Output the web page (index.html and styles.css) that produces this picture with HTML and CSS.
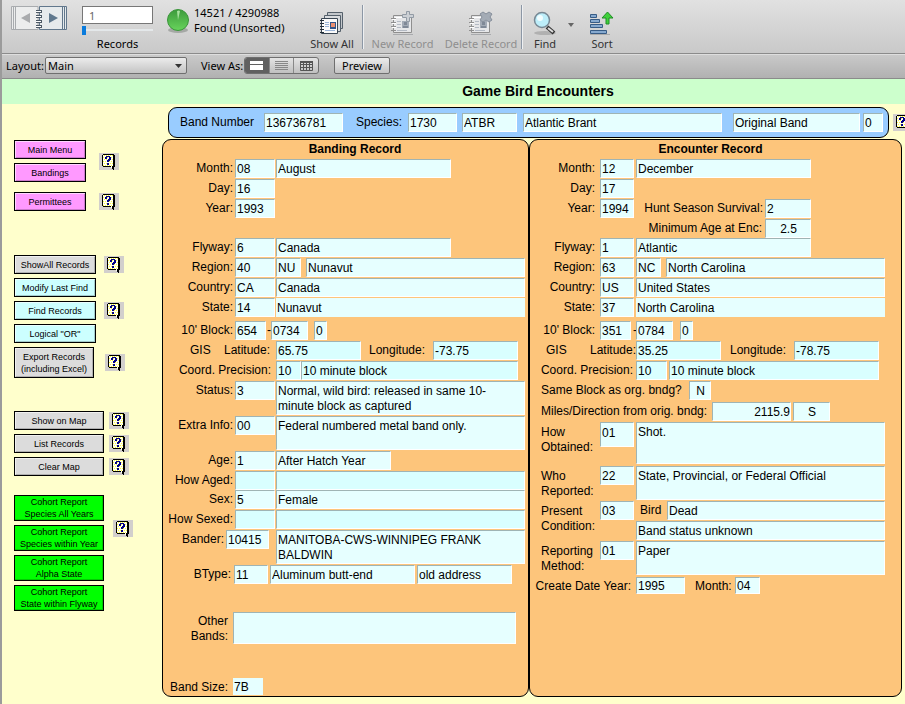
FILE: index.html
```html
<!DOCTYPE html>
<html lang="en">
<head>
<meta charset="utf-8">
<title>Game Bird Encounters</title>
<link rel="stylesheet" href="styles.css">
</head>
<body>
<svg class="defs" aria-hidden="true">
  <symbol id="help" viewBox="0 0 20 17">
    <path d="M4 1h11v1h1v12h-1v3h-1v-1h-1v-1h-1v-1H4v-1H3V2h1z" fill="#000"/>
    <path d="M4 2h10v11h-1v2h-1v-2H4z" fill="#fffff4"/>
    <path d="M5 2.500h9M4 4.500h10M5 6.500h9M4 8.500h10M5 10.500h9M4 12.500h9" stroke="#ffff3c" stroke-dasharray="1 1"/>
    <path d="M7 3h4v1h1v3h-1v1h-1v1H8V7h1V6h1V4H8v2H6V4h1zM8 10h2v2H8z" fill="#000084"/>
  </symbol>
  <symbol id="card" viewBox="0 0 24 24">
    <path d="M3 23.500h20" stroke="#a9abae"/>
    <path d="M3.500 4.500h18v17h-18z" fill="#e6e7e9" stroke="currentColor"/>
    <path d="M4.500 6.500h16" stroke="#fff"/>
    <path d="M1 7.500h5M1 11.500h5M1 15.500h5M1 19.500h5" stroke="currentColor"/>
    <path d="M2 8.500h4M2 12.500h4M2 16.500h4" stroke="#fff"/>
    <path d="M7 10.500h4M7 13.500h4M7 16.500h4M7 19.500h10" stroke="#b4bac4"/>
    <path d="M12 10h7v7h-7z" fill="#a3abb6"/>
    <path d="M14 11h3v3h-3zM13 15h5v2h-5z" fill="#7f8997"/>
  </symbol>
</svg>
<div class="app">
  <header class="toolbar">
    <div class="book">
      <button aria-label="Previous record"><svg width="28" height="27" viewBox="0 0 28 27"><path d="M.500 1.500H27v23H.500zM2.500 1.500v23M4.500 1.500v23" fill="#eceded" stroke="#a8abae"/><path d="M10 13l9-5v10z" fill="#a9abad"/></svg></button>
      <button aria-label="Next record"><svg width="29" height="27" viewBox="0 0 29 27"><path d="M.500 1.500h27v23H.500z" fill="#e6eaec" stroke="#61778c"/><path d="M23.500 2v22M25.500 2v22" stroke="#61778c"/><path d="M19 13l-9-5v10z" fill="#5f788e"/></svg></button>
      <svg class="rings" width="8" height="27" viewBox="0 0 8 27"><path d="M1 6.500h6M1 11.500h6M1 16.500h6M1 21.500h6" stroke="#4d5a66" stroke-width="3"/><path d="M1 6.500h5M1 11.500h5M1 16.500h5M1 21.500h5" stroke="#fff"/></svg>
    </div>
    <div class="records">
      <input id="rec" value="1" aria-label="Record number">
      <input id="slide" type="range" min="1" max="14521" value="1" aria-label="Record slider">
      <label for="rec">Records</label>
    </div>
    <svg class="pie" width="24" height="28" viewBox="0 0 24 28"><defs><linearGradient id="g" x2="0" y2="1"><stop stop-color="#3c9a3c"/><stop offset="1" stop-color="#68d45c"/></linearGradient></defs><ellipse cx="12" cy="23" rx="10" ry="3" fill="#a5a8a5"/><circle cx="12" cy="13" r="10.500" fill="url(#g)" stroke="#3b963b"/><path d="M12 13L11 4q2-1 3 0z" fill="#a6e29e"/></svg>
    <div class="found"><div>14521 / 4290988</div><div>Found (Unsorted)</div></div>
    <button class="tool show"><svg width="26" height="26" viewBox="0 0 26 26"><path d="M8.500 2.500h15v16h-15z" fill="#c3c7cb" stroke="#55606b"/><path d="M5.500 5.500h16v16h-16z" fill="#d9dcdf" stroke="#55606b"/><path d="M2.500 8.500h16v15h-16z" fill="#fafafa" stroke="#394653"/><path d="M1 10.500h4M1 13.500h4M1 16.500h4M1 19.500h4M1 22.500h4" stroke="#222d38"/><path d="M6 12.500h4M6 14.500h4M6 16.500h4M6 20.500h10" stroke="#9bb4d8"/><path d="M11 12h6v7h-6z" fill="#31548a"/><path d="M12 13h4v4h-4z" fill="#e88e70"/></svg><span>Show All</span></button>
    <i class="rule"></i>
    <button class="tool off new"><svg width="26" height="26" viewBox="0 0 26 26"><use href="#card" width="24" height="24" y="1"/><path d="M16.500 1.500h3v3h4v3h-4v4h-3v-4h-4v-3h4z" fill="#ccd0d5" stroke="#929ba5"/></svg><span>New Record</span></button>
    <button class="tool off del"><svg width="26" height="26" viewBox="0 0 26 26"><use href="#card" width="24" height="24" y="1"/><path d="M15 2l3 2 3-2 3 2-2 3 2 3-3 2-3-2-3 2-3-2 2-3-2-3z" fill="#a3abb5" stroke="#868f9b"/></svg><span>Delete Record</span></button>
    <i class="rule"></i>
    <button class="tool find"><svg width="24" height="26" viewBox="0 0 24 26"><ellipse cx="12" cy="23" rx="11" ry="2" fill="#b0b0b0"/><path d="M14 17l7 6" stroke="#333" stroke-width="4"/><path d="M15 18l5 4" stroke="#ddd" stroke-width="2"/><circle cx="9" cy="10" r="7.500" fill="#bdeefa" stroke="#788995" stroke-width="1.500"/><circle cx="7" cy="8" r="3" fill="#f2fdff"/></svg><span>Find</span></button>
    <button class="more" aria-label="Find options"></button>
    <button class="tool sort"><svg width="26" height="26" viewBox="0 0 26 26"><path d="M1 24.500h20" stroke="#aaa"/><path d="M1.500 4.500h6v3h-6zM1.500 9.500h9v3h-9zM1.500 14.500h12v3h-12zM1.500 20.500h16v3h-16z" fill="#86a9cf" stroke="#375c86"/><path d="M18.500 2l5.500 6h-4v6h-3V8h-4z" fill="#3fd13a" stroke="#218c26"/></svg><span>Sort</span></button>
  </header>
  <div class="layoutbar">
    <label for="lay">Layout:</label>
    <span class="pick"><select id="lay"><option>Main</option></select></span>
    <span class="viewas">View As:</span>
    <span class="seg">
      <button class="on" aria-label="Form view"><svg width="15" height="11"><path d="M1 1h13v3H1zM1 5h13v5H1z" fill="#fff"/></svg></button>
      <button aria-label="List view"><svg width="15" height="11"><path d="M1 1.500h13M1 3.500h13M1 5.500h13M1 7.500h13M1 9.500h13" stroke="#888"/></svg></button>
      <button aria-label="Table view"><svg width="15" height="11"><path d="M1 1h13v2H1z" fill="#555"/><path d="M1.500 1v9.500h12V1M1 4.500h13M1 7.500h13M4.500 1v9M7.500 1v9M10.500 1v9" fill="none" stroke="#555"/></svg></button>
    </span>
    <button class="preview">Preview</button>
  </div>
  <h1>Game Bird Encounters</h1>
  <div class="body">
    <nav class="side">
      <div class="set pink">
        <div class="stack"><button class="b">Main Menu</button><button class="b">Bandings</button></div>
        <button class="help" aria-label="Help"><svg><use href="#help"/></svg></button>
      </div>
      <div class="set pink second"><button class="b">Permittees</button><button class="help" aria-label="Help"><svg><use href="#help"/></svg></button></div>
      <div class="group rec">
        <div class="set"><button class="b gray">ShowAll Records</button><button class="help" aria-label="Help"><svg><use href="#help"/></svg></button></div>
        <div class="set"><button class="b">Modify Last Find</button></div>
        <div class="set"><button class="b">Find Records</button><button class="help" aria-label="Help"><svg><use href="#help"/></svg></button></div>
        <div class="set"><button class="b">Logical "OR"</button></div>
        <div class="set export"><button class="b gray">Export Records<br>(including Excel)</button><button class="help" aria-label="Help"><svg><use href="#help"/></svg></button></div>
      </div>
      <div class="group map">
        <div class="set"><button class="b gray">Show on Map</button><button class="help" aria-label="Help"><svg><use href="#help"/></svg></button></div>
        <div class="set"><button class="b gray">List Records</button><button class="help" aria-label="Help"><svg><use href="#help"/></svg></button></div>
        <div class="set"><button class="b gray">Clear Map</button><button class="help" aria-label="Help"><svg><use href="#help"/></svg></button></div>
      </div>
      <div class="group cohort">
        <div class="set">
          <div class="stack"><button class="b">Cohort Report<br>Species All Years</button><button class="b">Cohort Report<br>Species within Year</button></div>
          <button class="help" aria-label="Help"><svg><use href="#help"/></svg></button>
        </div>
        <button class="b">Cohort Report<br>Alpha State</button>
        <button class="b">Cohort Report<br>State within Flyway</button>
      </div>
    </nav>
    <main>
      <div class="top">
        <div class="band">
          <label for="bn">Band Number</label><input id="bn" class="w79" value="136736781">
          <label for="sp" class="sp">Species:</label><input id="sp" class="w49" value="1730">
          <input class="w55 alpha" aria-label="Species code" value="ATBR">
          <input class="grow name" aria-label="Species name" value="Atlantic Brant">
          <input class="w127 orig" aria-label="Band type" value="Original Band">
          <input class="w20 zero" aria-label="Band flag" value="0">
        </div>
        <button class="help" aria-label="Help"><svg><use href="#help"/></svg></button>
      </div>
      <div class="panels">
        <section class="panel banding">
          <h2>Banding Record</h2>
          <div class="row"><label for="a1">Month:</label><input id="a1" class="code" value="08"><input class="w175" aria-label="Month name" value="August"></div>
          <div class="row"><label for="a2">Day:</label><input id="a2" class="code" value="16"></div>
          <div class="row"><label for="a3">Year:</label><input id="a3" class="code" value="1993"></div>
          <div class="row skip"><label for="a4">Flyway:</label><input id="a4" class="code" value="6"><input class="w175" aria-label="Flyway name" value="Canada"></div>
          <div class="row"><label for="a5">Region:</label><input id="a5" class="code" value="40"><input class="w25" aria-label="Region code" value="NU"><input class="grow g4" aria-label="Region name" value="Nunavut"></div>
          <div class="row"><label for="a6">Country:</label><input id="a6" class="code" value="CA"><input class="grow" aria-label="Country name" value="Canada"></div>
          <div class="row"><label for="a7">State:</label><input id="a7" class="code" value="14"><input class="grow flat" aria-label="State name" value="Nunavut"></div>
          <div class="row block"><label for="a8">10' Block:</label><input id="a8" class="w31" value="654"><span class="dash">-</span><input class="w37" aria-label="Block longitude" value="0734"><input class="w13" aria-label="Block part" value="0"></div>
          <div class="row gis"><span class="gl">GIS</span><label for="a9" class="lat">Latitude:</label><input id="a9" class="w85 deep" value="65.75"><label for="a10" class="lon">Longitude:</label><input id="a10" class="w85 deep" value="-73.75"></div>
          <div class="row prec"><label for="a11">Coord. Precision:</label><input id="a11" class="w25 deep" value="10"><input class="grow deep" aria-label="Precision" value="10 minute block"></div>
          <div class="row"><label for="a12">Status:</label><input id="a12" class="code" value="3"><textarea class="grow h34" aria-label="Status text">Normal, wild bird: released in same 10-minute block as captured</textarea></div>
          <div class="row"><label for="a13">Extra Info:</label><input id="a13" class="code" value="00"><textarea class="grow h34" aria-label="Extra info text">Federal numbered metal band only.</textarea></div>
          <div class="row"><label for="a14">Age:</label><input id="a14" class="code" value="1"><input class="w115" aria-label="Age text" value="After Hatch Year"></div>
          <div class="row"><label for="a15">How Aged:</label><input id="a15" class="code deep"><input class="grow deep" aria-label="How aged text"></div>
          <div class="row tight"><label for="a16">Sex:</label><input id="a16" class="code" value="5"><input class="grow" aria-label="Sex text" value="Female"></div>
          <div class="row"><label for="a17">How Sexed:</label><input id="a17" class="code deep"><input class="grow deep" aria-label="How sexed text"></div>
          <div class="row bander"><label for="a18">Bander:</label><input id="a18" class="w43" value="10415"><textarea class="grow h34" aria-label="Bander name">MANITOBA-CWS-WINNIPEG FRANK BALDWIN</textarea></div>
          <div class="row btype"><label for="a19">BType:</label><input id="a19" class="w34" value="11"><input class="w145" aria-label="Band type text" value="Aluminum butt-end"><input class="w95" aria-label="Address type" value="old address"></div>
          <div class="row other"><label for="a20">Other<br>Bands:</label><textarea id="a20" class="grow h32"></textarea></div>
          <div class="row size"><label for="a21">Band Size:</label><input id="a21" class="w30 flat h17" value="7B"></div>
        </section>
        <section class="panel enc">
          <h2>Encounter Record</h2>
          <div class="row"><label for="b1">Month:</label><input id="b1" class="code" value="12"><input class="w175" aria-label="Month name" value="December"></div>
          <div class="row"><label for="b2">Day:</label><input id="b2" class="code" value="17"></div>
          <div class="row"><label for="b3">Year:</label><input id="b3" class="code" value="1994"><label class="side-label" for="b4">Hunt Season Survival:</label><input id="b4" class="w46" value="2"></div>
          <div class="row age"><label for="b5">Minimum Age at Enc:</label><input id="b5" class="w46 mid" value="2.5"></div>
          <div class="row tight"><label for="b6">Flyway:</label><input id="b6" class="code" value="1"><input class="w175" aria-label="Flyway name" value="Atlantic"></div>
          <div class="row"><label for="b7">Region:</label><input id="b7" class="code" value="63"><input class="w25" aria-label="Region code" value="NC"><input class="grow g4" aria-label="Region name" value="North Carolina"></div>
          <div class="row"><label for="b8">Country:</label><input id="b8" class="code" value="US"><input class="grow" aria-label="Country name" value="United States"></div>
          <div class="row"><label for="b9">State:</label><input id="b9" class="code" value="37"><input class="grow flat" aria-label="State name" value="North Carolina"></div>
          <div class="row block"><label for="b10">10' Block:</label><input id="b10" class="w31" value="351"><span class="dash">-</span><input class="w37" aria-label="Block longitude" value="0784"><input class="w13" aria-label="Block part" value="0"></div>
          <div class="row gis"><span class="gl">GIS</span><label for="b11" class="lat">Latitude:</label><input id="b11" class="w85 deep" value="35.25"><label for="b12" class="lon">Longitude:</label><input id="b12" class="w85 deep" value="-78.75"></div>
          <div class="row prec"><label for="b13">Coord. Precision:</label><input id="b13" class="w31 deep" value="10"><input class="grow deep" aria-label="Precision" value="10 minute block"></div>
          <div class="row same"><label for="b14">Same Block as org. bndg?</label><input id="b14" class="w22 mid" value="N"></div>
          <div class="row miles"><label for="b15">Miles/Direction from orig. bndg:</label><input id="b15" class="w79 end" value="2115.9"><input class="w37 mid" aria-label="Direction" value="S"></div>
          <div class="row two"><label for="b16">How<br>Obtained:</label><input id="b16" class="code h25" value="01"><textarea class="grow h42" aria-label="How obtained text">Shot.</textarea></div>
          <div class="row two who"><label for="b17">Who<br>Reported:</label><input id="b17" class="code" value="22"><textarea class="grow h34" aria-label="Who reported text">State, Provincial, or Federal Official</textarea></div>
          <div class="row two"><label for="b18">Present<br>Condition:</label><input id="b18" class="code" value="03">
            <div class="cond"><div class="bird"><label for="b19">Bird</label><input id="b19" class="grow" value="Dead"></div><input aria-label="Band status" value="Band status unknown"></div></div>
          <div class="row two"><label for="b20">Reporting<br>Method:</label><input id="b20" class="code" value="01"><textarea class="grow h34" aria-label="Reporting method text">Paper</textarea></div>
          <div class="row create"><label for="b21">Create Date Year:</label><input id="b21" class="w49 h17" value="1995"><label for="b22" class="cm">Month:</label><input id="b22" class="w25 h17" value="04"></div>
        </section>
      </div>
    </main>
  </div>
</div>
</body>
</html>
```
FILE: styles.css
```css
* { box-sizing: border-box; }
body {
  margin: 0;
  background: #ffffcc;
  color: #000;
  font: 12px/15px "Liberation Sans", Arial, sans-serif;
  overflow-x: hidden;
}
.defs { position: absolute; width: 0; height: 0; }
button, input, textarea, select { font: inherit; color: inherit; margin: 0; border-radius: 0; }
button { padding: 0; border: 0; background: none; }
.app { min-height: 100vh; border-left: 2px solid #9b9b9b; }

/* toolbar */
.toolbar {
  display: flex;
  align-items: flex-start;
  height: 54px;
  padding: 5px 8px 0 9px;
  background: linear-gradient(#e1e1e1, #c9c9c9);
  border-bottom: 1px solid #8b8b8b;
  font: 11px/15px "Noto Sans", Tahoma, sans-serif;
}
.book { position: relative; display: flex; width: 57px; }
.book button, .book svg { display: block; }
.book .rings { position: absolute; left: 24px; top: 0; }
.records { display: flex; flex-direction: column; width: 71px; margin: 1px 0 0 14px; }
.records input:first-child { width: 100%; height: 18px; padding: 0 6px; border: 1px solid #777; background: #fff; color: #666; }
.records label { text-align: center; margin-top: 1px; }
#slide { appearance: none; width: 100%; height: 10px; margin-top: 1px; border: 0; padding: 0; background: linear-gradient(#e4e8ea, #e4e8ea) center / 100% 2px no-repeat; }
#slide::-webkit-slider-thumb { appearance: none; width: 4px; height: 9px; background: #0a7bdc; }
.pie { margin: 2px 0 0 13px; }
.found { width: 103px; margin-left: 4px; white-space: nowrap; }
.tool { display: flex; flex-direction: column; align-items: center; margin-top: 5px; color: #333; white-space: nowrap; }
.tool svg { display: block; }
.show { width: 60px; margin-left: 5px; }
.rule { width: 2px; height: 44px; border-left: 1px solid #8c97a5; border-right: 1px solid #eef0f2; }
.off { color: #8f8f8f; }
.new { width: 77px; }
.del { width: 80px; }
.find { width: 44px; }
.more { width: 6px; height: 4px; margin: 18px 0 0 1px; background: #666; clip-path: polygon(0 0, 100% 0, 50% 100%); }
.sort { width: 56px; }

.layoutbar {
  display: flex;
  align-items: center;
  height: 25px;
  padding: 0 4px 2px;
  background: linear-gradient(#c9c9c9, #b1b1b1);
  border-top: 1px solid #dedede;
  border-bottom: 1px solid #8b8b8b;
  font: 11px/15px "Noto Sans", Tahoma, sans-serif;
  white-space: nowrap;
}
.layoutbar label { width: 39px; }
.pick { position: relative; width: 142px; }
.pick::after { content: ""; position: absolute; right: 5px; top: 7px; width: 7px; height: 4px; background: #333; clip-path: polygon(0 0, 100% 0, 50% 100%); pointer-events: none; }
.pick select, .preview { appearance: none; display: block; height: 17px; border: 1px solid #6f6f6f; border-radius: 2px; background: linear-gradient(#ececec, #c4c4c4); }
.pick select { width: 100%; padding: 0 2px; line-height: 14px; }
.viewas { width: 43px; margin-left: 14px; }
.seg { display: flex; width: 75px; height: 17px; border: 1px solid #6f6f6f; border-radius: 3px; background: linear-gradient(#e4e4e4, #c0c0c0); overflow: hidden; }
.seg button { flex: 1; display: grid; place-items: center; border-left: 1px solid #888; }
.seg button.on { background: #606060; border: 0; }
.preview { width: 56px; margin-left: 15px; line-height: 14px; }

h1 { margin: 0; padding-left: 169px; height: 25px; background: #ccffcc; font: bold 14px/24px "Liberation Sans", Arial, sans-serif; text-align: center; }
h2 { margin: 0; height: 18px; font-size: 12px; line-height: 19px; text-align: center; }

.body { display: flex; }

/* sidebar */
.side { flex: none; width: 160px; padding: 36px 0 0 12px; font-size: 9px; line-height: 12px; }
.side .b { display: block; width: 72px; min-height: 19px; border: 1px solid #000; background: #ccffff; box-shadow: inset 1px 1px #fff9, inset -1px -1px #0003; white-space: nowrap; }
.stack, .group { display: flex; flex-direction: column; gap: 4px; }
.set { display: flex; align-items: center; gap: 8px; }
.help { flex: none; width: 20px; height: 17px; background: #d2cfcc; }
.help svg { display: block; width: 20px; height: 17px; }
.pink { gap: 13px; }
.side .pink .b { background: #ff99ff; }
.side .gray { background: #dcdcdc; }
.second { margin-top: 10px; }
.rec { margin-top: 44px; }
.side .rec .b { width: 82px; }
.side .export .b { width: 80px; min-height: 31px; }
.export { gap: 11px; }
.map { margin-top: 33px; }
.map .set { gap: 5px; }
.side .map .b, .side .cohort .b { width: 90px; }
.cohort { margin-top: 19px; }
.cohort .set { gap: 9px; align-items: flex-end; }
.cohort .help { margin-bottom: 14px; }
.side .cohort .b { height: 26px; background: #00ff00; box-shadow: inset -1px -1px #0003; }

/* record area */
main { flex: 1; min-width: 0; padding: 3px 3px 7px 0; }
.top { display: flex; align-items: center; gap: 4px; margin: 0 -11px 1px 6px; }
.band { flex: 1; min-width: 0; display: flex; align-items: center; height: 31px; padding: 0 5px 0 11px; border: 1px solid #000; border-radius: 9px; background: #99ccff; }
.band label { flex: none; width: 84px; }
.band .sp { width: 52px; margin-left: 13px; }
.alpha { margin-left: 5px; }
.name { margin-left: 6px; }
.orig { margin-left: 11px; }
.zero { margin-left: 3px; }
input, textarea {
  display: block;
  flex: none;
  height: 19px;
  padding: 1px 0 0 1px;
  border: 1px solid;
  border-color: #9fb4b4 #fff #fff #9fb4b4;
  background: #e6ffff;
  outline: 0;
}
textarea { padding: 2px 6px 1px 1px; resize: none; overflow: hidden; }
.panels { display: grid; grid-template-columns: 367fr 373fr; }
.panel { min-width: 0; border: 1px solid #000; border-radius: 9px; background: #fdc57b; padding: 0 3px 0 0; }
.enc { padding-right: 16px; }
.banding h2 { padding-left: 22px; }
.enc h2 { padding-left: 6px; }
.row { display: flex; align-items: flex-start; gap: 1px; margin-top: 1px; }
.row label, .row span { flex: none; line-height: 18px; white-space: nowrap; }
.row > label:first-child { width: 71px; padding-right: 1px; text-align: right; }
.code { width: 40px; }
.enc .row { gap: 2px; }
.enc .row > label:first-child { width: 68px; padding-right: 3px; }
.enc .code { width: 34px; }
.grow { flex: 1; min-width: 0; width: 0; }
input.flat { border-color: #e6ffff; padding: 0; }
.deep { background: #d9ffff; }
.mid { text-align: center; }
.end { text-align: right; }
.w13 { width: 13px; } .w20 { width: 20px; } .w22 { width: 22px; } .w25 { width: 25px; }
.w30 { width: 30px; } .w31 { width: 31px; } .w34 { width: 34px; } .w37 { width: 37px; }
.w43 { width: 43px; } .w46 { width: 46px; } .w49 { width: 49px; } .w55 { width: 55px; }
.w79 { width: 79px; } .w85 { width: 85px; } .w95 { width: 95px; } .w115 { width: 115px; }
.w127 { width: 127px; } .w145 { width: 145px; } .w175 { width: 175px; }
.h17 { height: 17px; padding-top: 0; } .h25 { height: 25px; padding-bottom: 5px; } .h32 { height: 32px; } .h34 { height: 34px; } .h42 { height: 42px; }
.row.tight { margin-top: 0; }
.row.skip { margin-top: 20px; }
.row.block { margin-top: 4px; }
.g4 { margin-left: 4px; }
.enc .g4 { margin-left: 3px; }
.dash { width: 3px; text-align: center; }
.enc .dash { width: 1px; }
.row.block .w13 { margin-left: 5px; }
.row .gl { width: 60px; padding-left: 27px; }
.row .lat { width: 51px; }
.row .lon { width: 70px; padding-left: 7px; }
.enc .gl { padding-left: 16px; width: 58px; }
.enc .lat { width: 44px; }
.enc .row .lon { width: 69px; }
.row.prec > label:first-child { width: 112px; padding-right: 5px; }
.banding .row.prec { gap: 0; }
.enc .row.prec > label:first-child { width: 104px; padding-right: 1px; }
.banding .gis, .banding .prec { padding-right: 7px; }
.banding .row.prec > label:first-child { width: 113px; }
.enc .prec { padding-right: 6px; }
.bander > label:first-child { margin-right: -9px; padding-right: 11px; }
.row.bander > label:first-child { padding-right: 10px; }
.bander textarea { margin-left: 6px; }
.row.btype > label:first-child { width: 69px; }
.row.btype { gap: 2px; }
.row.other > label:first-child, .row.size > label:first-child { width: 69px; padding-right: 4px; }
.row.other { margin-top: 28px; padding-right: 9px; }
.row.other label { padding-top: 2px; }
.row.other label, .two > label { line-height: 15px; }
.row.size { margin-top: 34px; }
.enc .row.age > label:first-child { width: 233px; padding-right: 1px; }
.enc .side-label { width: 127px; text-align: right; }
.enc .row.same > label:first-child { width: 157px; padding-left: 11px; text-align: left; }
.row.miles { margin-top: 2px; }
.enc .row.miles > label:first-child { width: 180px; padding: 0 0 0 11px; text-align: left; }
.enc .row.two > label:first-child { padding: 3px 0 0 11px; height: 33px; text-align: left; line-height: 15px; }
.row.who { margin-top: 2px; }
.cond { flex: 1; min-width: 0; display: flex; flex-direction: column; gap: 1px; }
.bird { display: flex; }
.bird label { width: 31px; padding-left: 4px; }
.enc .row.create { margin-top: 2px; }
.enc .row.create > label:first-child { width: 104px; padding: 0 3px 0 0; }
.enc .cm { width: 46px; padding-left: 8px; }
```
